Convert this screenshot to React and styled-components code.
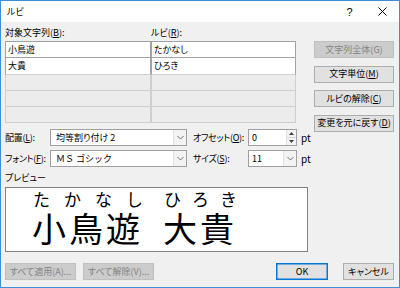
import React from "react";
import styled, { createGlobalStyle, css } from "styled-components";

const Global = createGlobalStyle`
  html, body { margin: 0; padding: 0; background: #f0f0f0; }
  * { box-sizing: border-box; }
`;

const UI = `"Noto Sans CJK JP", "Noto Sans", sans-serif`;

const Window = styled.div`
  width: 400px;
  height: 288px;
  border: 1px solid #3f8fd8;
  background: #f0f0f0;
  font-family: ${UI};
  font-feature-settings: "palt" 1;
  font-size: 9px;
  color: #000;
  display: flex;
  flex-direction: column;
  overflow: hidden;
`;

const TitleBar = styled.div`
  height: 21px;
  background: #fff;
  display: flex;
  align-items: center;
  padding-left: 6px;
  flex: none;
`;

const Title = styled.div`
  font-size: 9px;
  line-height: 12px;
  flex: 1;
`;

const TitleButton = styled.div`
  width: 33px;
  height: 21px;
  display: flex;
  align-items: center;
  justify-content: center;
  font-size: 11px;
  line-height: 12px;
  font-family: "Liberation Sans", sans-serif;
`;

const Body = styled.div`
  flex: 1;
  display: flex;
  flex-direction: column;
  padding: 5px 5px 0 4px;
`;

const Main = styled.div`
  display: flex;
`;

const LeftPart = styled.div`
  width: 309px;
  display: flex;
  flex-direction: column;
`;

const Columns = styled.div`
  display: grid;
  grid-template-columns: 146px 145px;
`;

const Label = styled.div`
  font-size: 9px;
  line-height: 12px;
  white-space: nowrap;
`;

const LabelRow = styled(Columns)`
  height: 14px;
  align-items: start;
`;

const Grid = styled(Columns)`
  grid-template-rows: 17px 17px 16px 16px 16px;
`;

const Cell = styled.div`
  border: 1px solid ${(p) => (p.$filled ? "#a3a3a3" : "#cfcfcf")};
  border-top-width: ${(p) => (p.$first ? 1 : 0)}px;
  background: ${(p) => (p.$filled ? "#fff" : "#ececec")};
  padding-left: 2px;
  display: flex;
  align-items: center;
  font-size: 9px;
  line-height: 12px;
  ${(p) =>
    p.$filled &&
    p.$next &&
    css`
      border-bottom-color: #cfcfcf;
    `}
`;

const FormRows = styled.div`
  margin-top: 6px;
  display: flex;
  flex-direction: column;
  gap: 4px;
`;

const FormRow = styled.div`
  height: 17px;
  display: flex;
  align-items: center;
`;

const FieldLabel = styled.div`
  width: ${(p) => p.$w}px;
  flex: none;
  font-size: 9px;
  line-height: 12px;
  letter-spacing: -0.3px;
  white-space: nowrap;
`;

const Field = styled.div`
  width: ${(p) => p.$w}px;
  height: 17px;
  flex: none;
  border: 1px solid #a0a0a0;
  background: #fff;
  display: flex;
  align-items: stretch;
`;

const FieldText = styled.div`
  flex: 1;
  padding-left: ${(p) => p.$pad || 5}px;
  display: flex;
  align-items: center;
  font-size: 9px;
  line-height: 12px;
  white-space: nowrap;
  ${(p) =>
    p.$mono &&
    css`
      font-feature-settings: normal;
    `}
`;

const ArrowBox = styled.div`
  width: 13px;
  flex: none;
  background: #f3f3f3;
  border-left: 1px solid #e0e0e0;
  display: flex;
  align-items: center;
  justify-content: center;
`;

const Spin = styled.div`
  width: 10px;
  flex: none;
  display: flex;
  flex-direction: column;
  border-left: 1px solid #e0e0e0;
`;

const SpinHalf = styled.div`
  flex: 1;
  display: flex;
  align-items: center;
  justify-content: center;
  background: #f3f3f3;
  border-bottom: ${(p) => (p.$top ? "1px solid #d6d6d6" : "none")};
`;

const Unit = styled.div`
  margin-left: 4px;
  font-size: 10px;
  line-height: 12px;
`;

const Gap = styled.div`
  width: ${(p) => p.$w}px;
  flex: none;
`;

const PreviewLabel = styled.div`
  margin-top: 5px;
  height: 12px;
  font-size: 9px;
  line-height: 12px;
`;

const PreviewBox = styled.div`
  margin-top: 3px;
  width: 303px;
  height: 65px;
  border: 1px solid #828282;
  background: #fff;
  display: flex;
  gap: 20px;
  padding-left: 26px;
  padding-top: 2px;
  font-family: "Noto Sans CJK JP", sans-serif;
  font-feature-settings: normal;
`;

const RubyWord = styled.div`
  display: flex;
  flex-direction: column;
`;

const RubyText = styled.div`
  display: flex;
  justify-content: space-between;
  font-size: 17px;
  line-height: 17px;
  height: 19px;
  padding-left: 1px;
`;

const BaseText = styled.div`
  margin-top: 2px;
  font-size: 34px;
  line-height: 34px;
  letter-spacing: 3px;
  white-space: nowrap;
`;

const RightColumn = styled.div`
  margin-left: auto;
  width: 80px;
  padding-top: 14px;
  display: flex;
  flex-direction: column;
  gap: 7.5px;
`;

const Button = styled.div`
  width: ${(p) => (p.$w ? `${p.$w}px` : "100%")};
  height: 17px;
  flex: none;
  display: flex;
  align-items: center;
  justify-content: center;
  font-size: 9px;
  line-height: 12px;
  white-space: nowrap;
  border: 1px solid #adadad;
  background: #e1e1e1;
  color: #000;
  ${(p) =>
    p.$disabled &&
    css`
      border-color: #bfbfbf;
      background: #cccccc;
      color: #838383;
    `}
  ${(p) =>
    p.$default &&
    css`
      border-color: #0078d7;
      box-shadow: inset 0 0 0 0.5px #0078d7;
    `}
`;

const BottomRow = styled.div`
  margin-top: 11px;
  display: flex;
  align-items: center;
  gap: 7px;
`;

const Spacer = styled.div`
  flex: 1;
`;

const Chevron = () => (
  <svg width="7" height="5" viewBox="0 0 7 5">
    <polyline points="0.5,1 3.5,4 6.5,1" fill="none" stroke="#707070" strokeWidth="1" />
  </svg>
);

const Tri = ({ up }) => (
  <svg width="5" height="3" viewBox="0 0 5 3">
    <polygon points={up ? "0,3 5,3 2.5,0" : "0,0 5,0 2.5,3"} fill="#404040" />
  </svg>
);

const rows = [
  ["小鳥遊", "たかなし"],
  ["大貴", "ひろき"],
  ["", ""],
  ["", ""],
  ["", ""],
];

export default function App() {
  return (
    <>
      <Global />
      <Window>
        <TitleBar>
          <Title>ルビ</Title>
          <TitleButton>?</TitleButton>
          <TitleButton>
            <svg width="9" height="9" viewBox="0 0 9 9">
              <path d="M0.5 0.5 L8.5 8.5 M8.5 0.5 L0.5 8.5" stroke="#000" strokeWidth="1" />
            </svg>
          </TitleButton>
        </TitleBar>
        <Body>
          <Main>
            <LeftPart>
              <LabelRow>
                <Label>
                  対象文字列(<u>B</u>):
                </Label>
                <Label>
                  ルビ(<u>R</u>):
                </Label>
              </LabelRow>
              <Grid>
                {rows.map((r, i) =>
                  r.map((t, j) => (
                    <Cell
                      key={`${i}-${j}`}
                      $filled={i < 2}
                      $first={i === 0}
                      $next={i === 1}
                    >
                      {t}
                    </Cell>
                  ))
                )}
              </Grid>
              <FormRows>
                <FormRow>
                  <FieldLabel $w={45}>
                    配置(<u>L</u>):
                  </FieldLabel>
                  <Field $w={137}>
                    <FieldText>均等割り付け 2</FieldText>
                    <ArrowBox>
                      <Chevron />
                    </ArrowBox>
                  </Field>
                  <Gap $w={6} />
                  <FieldLabel $w={55}>
                    オフセット(<u>O</u>):
                  </FieldLabel>
                  <Field $w={49}>
                    <FieldText $pad={3}>0</FieldText>
                    <Spin>
                      <SpinHalf $top>
                        <Tri up />
                      </SpinHalf>
                      <SpinHalf>
                        <Tri />
                      </SpinHalf>
                    </Spin>
                  </Field>
                  <Unit>pt</Unit>
                </FormRow>
                <FormRow>
                  <FieldLabel $w={45}>
                    フォント(<u>F</u>):
                  </FieldLabel>
                  <Field $w={137}>
                    <FieldText $mono>ＭＳ ゴシック</FieldText>
                    <ArrowBox>
                      <Chevron />
                    </ArrowBox>
                  </Field>
                  <Gap $w={6} />
                  <FieldLabel $w={55}>
                    サイズ(<u>S</u>):
                  </FieldLabel>
                  <Field $w={49}>
                    <FieldText $pad={3}>11</FieldText>
                    <ArrowBox>
                      <Chevron />
                    </ArrowBox>
                  </Field>
                  <Unit>pt</Unit>
                </FormRow>
              </FormRows>
              <PreviewLabel>プレビュー</PreviewLabel>
              <PreviewBox>
                <RubyWord>
                  <RubyText>
                    <span>た</span>
                    <span>か</span>
                    <span>な</span>
                    <span>し</span>
                  </RubyText>
                  <BaseText>小鳥遊</BaseText>
                </RubyWord>
                <RubyWord>
                  <RubyText>
                    <span>ひ</span>
                    <span>ろ</span>
                    <span>き</span>
                  </RubyText>
                  <BaseText>大貴</BaseText>
                </RubyWord>
              </PreviewBox>
            </LeftPart>
            <RightColumn>
              <Button $disabled>文字列全体(G)</Button>
              <Button>
                文字単位(<u>M</u>)
              </Button>
              <Button>
                ルビの解除(<u>C</u>)
              </Button>
              <Button>
                変更を元に戻す(<u>D</u>)
              </Button>
            </RightColumn>
          </Main>
          <BottomRow>
            <Button $w={71} $disabled>
              すべて適用(A)...
            </Button>
            <Button $w={71} $disabled>
              すべて解除(V)...
            </Button>
            <Spacer />
            <Button $w={52} $default>
              OK
            </Button>
            <Gap $w={1} />
            <Button $w={51}>キャンセル</Button>
          </BottomRow>
        </Body>
      </Window>
    </>
  );
}
